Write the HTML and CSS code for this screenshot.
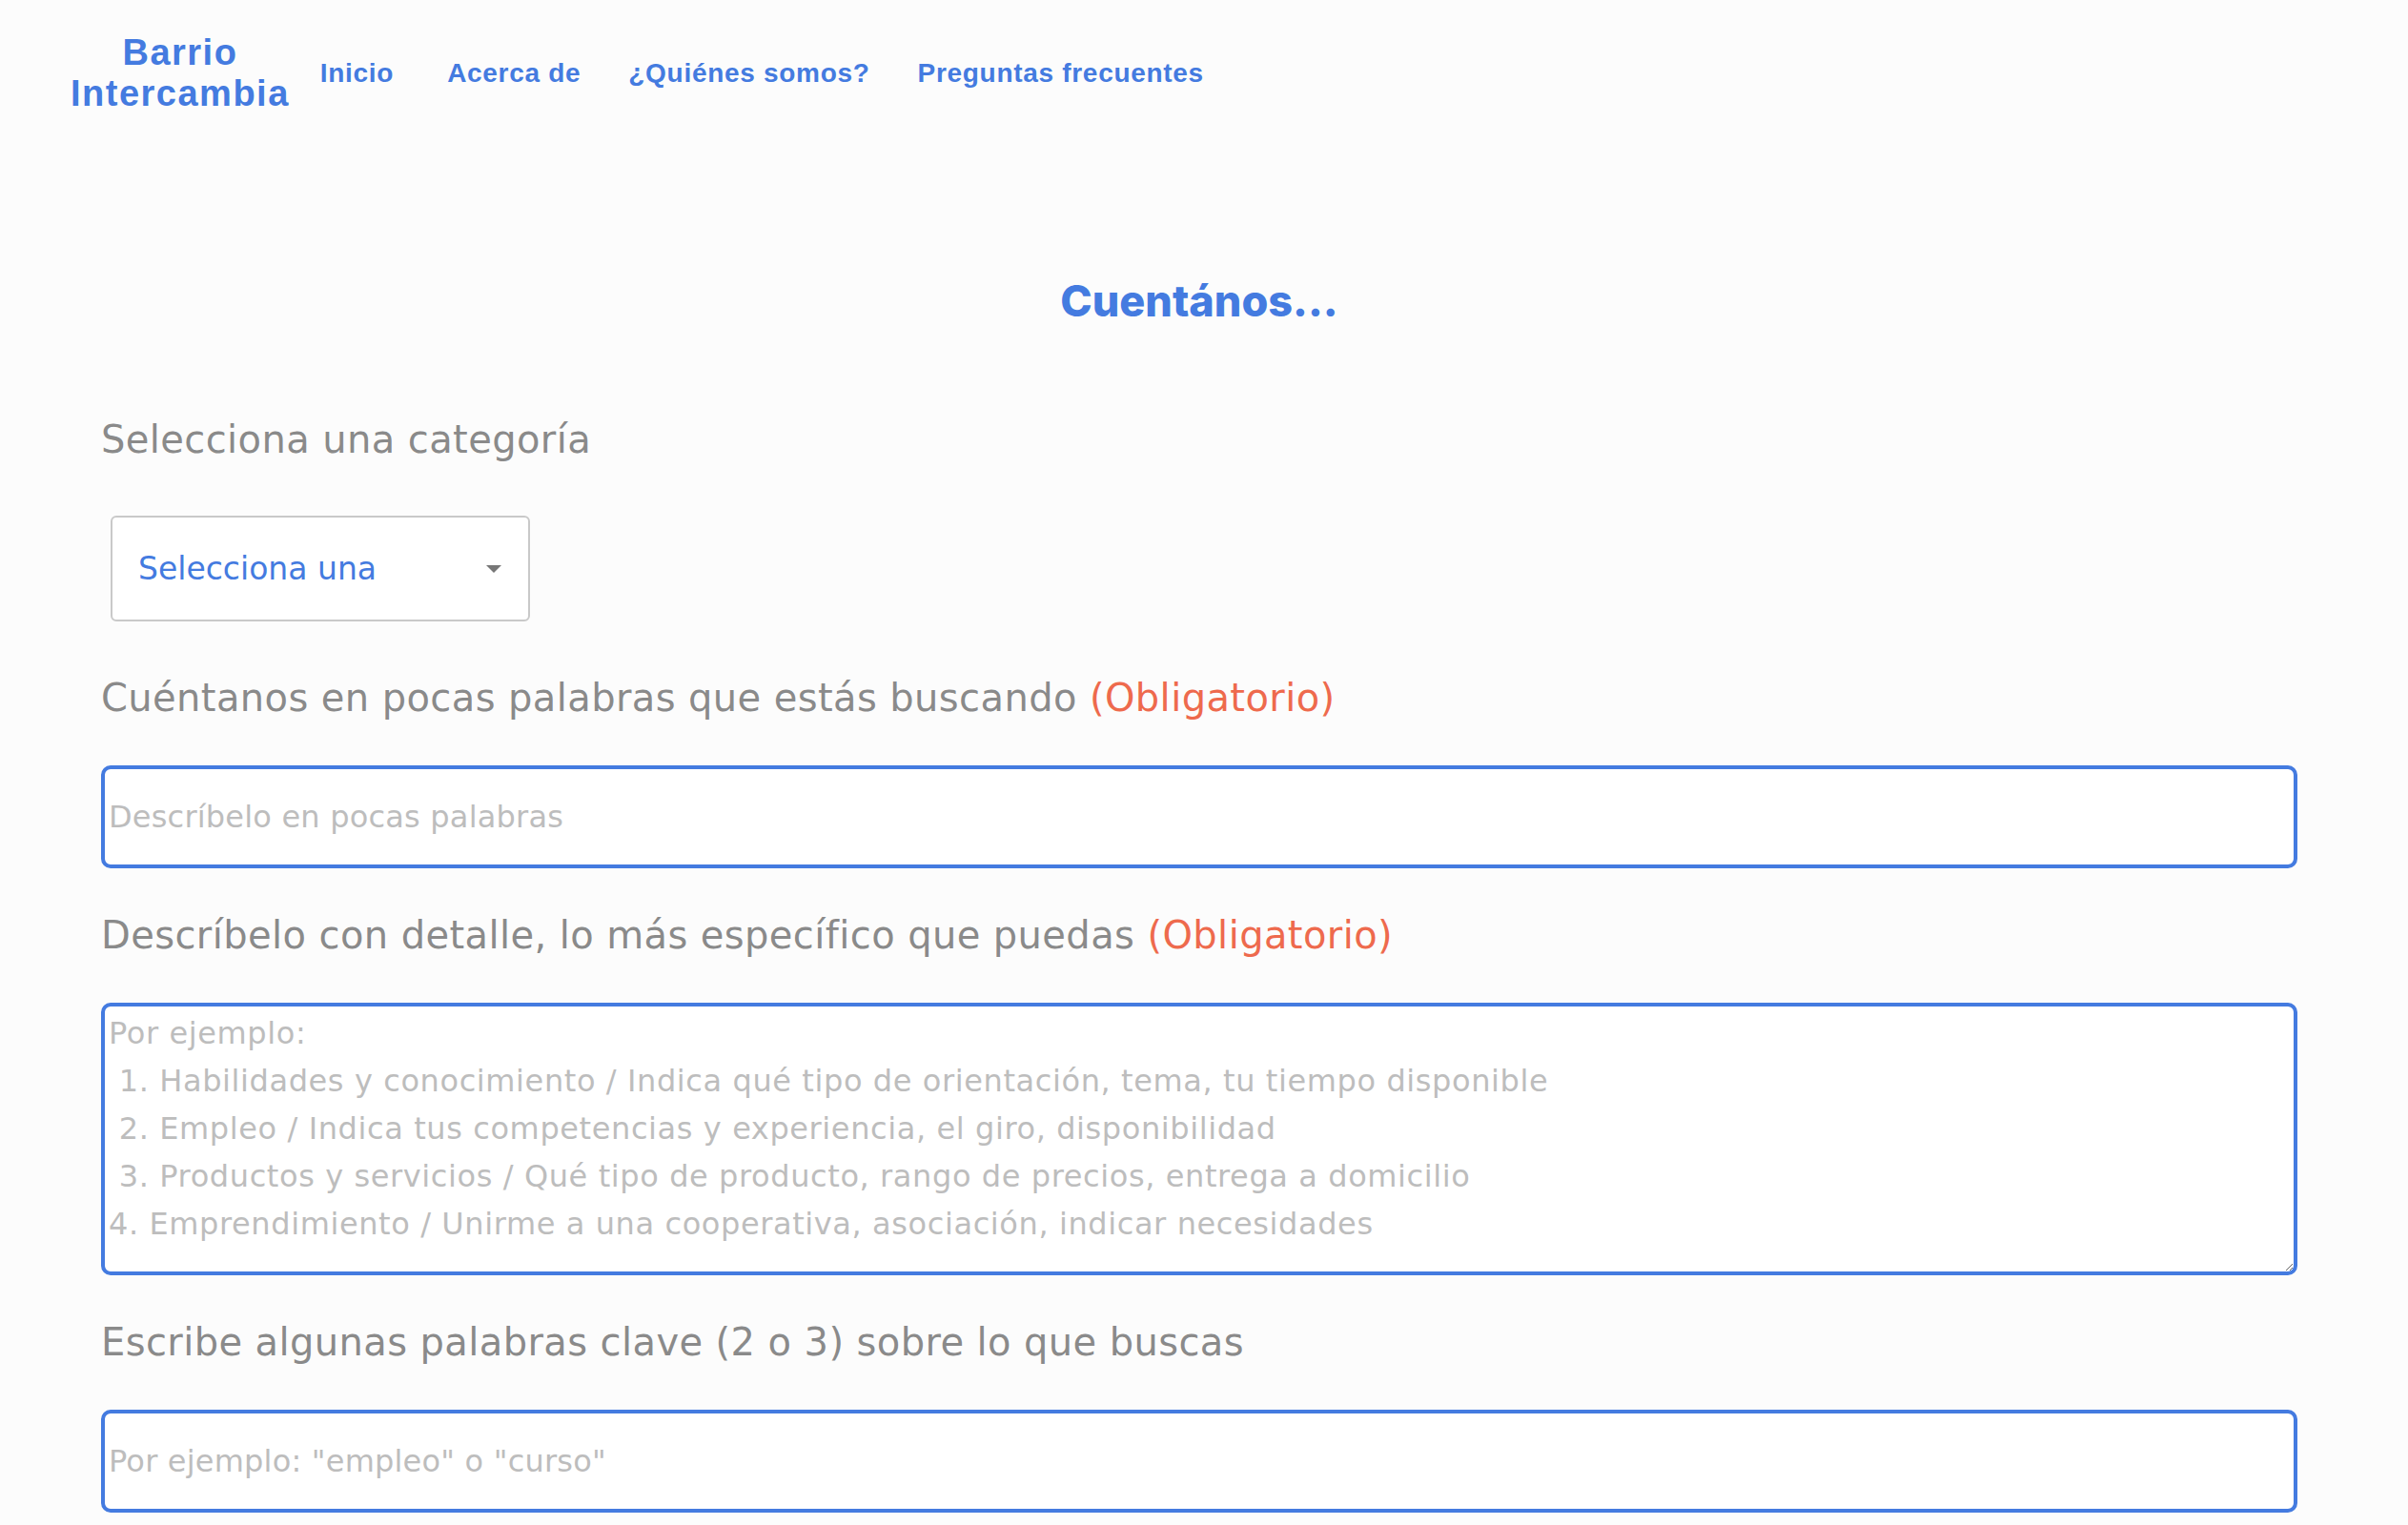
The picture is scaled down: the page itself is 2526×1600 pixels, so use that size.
FILE: index.html
```html
<!DOCTYPE html>
<html lang="es">
<head>
<meta charset="utf-8">
<title>Barrio Intercambia</title>
<link rel="stylesheet" href="styles.css">
</head>
<body>
<header class="navbar">
  <a class="brand" href="#">Barrio<br>Intercambia</a>
  <nav class="nav">
    <a class="nav-link nav-link-first" href="#">Inicio</a>
    <a class="nav-link" href="#">Acerca de</a>
    <a class="nav-link" href="#">¿Quiénes somos?</a>
    <a class="nav-link" href="#">Preguntas frecuentes</a>
  </nav>
</header>
<main class="form-page">
  <h1 class="title">Cuentános...</h1>
  <form class="form">
    <div class="field">
      <label class="label" for="cat">Selecciona una categoría</label>
      <div class="select-wrap">
        <select id="cat" class="select">
          <option>Selecciona una</option>
        </select>
        <span class="caret"></span>
      </div>
    </div>
    <div class="field field-after-select">
      <label class="label" for="short">Cuéntanos en pocas palabras que estás buscando <span class="req">(Obligatorio)</span></label>
      <input id="short" class="input" type="text" placeholder="Descríbelo en pocas palabras">
    </div>
    <div class="field">
      <label class="label" for="detail">Descríbelo con detalle, lo más específico que puedas <span class="req">(Obligatorio)</span></label>
      <textarea id="detail" class="textarea" placeholder="Por ejemplo:&#10; 1. Habilidades y conocimiento / Indica qué tipo de orientación, tema, tu tiempo disponible&#10; 2. Empleo / Indica tus competencias y experiencia, el giro, disponibilidad&#10; 3. Productos y servicios / Qué tipo de producto, rango de precios, entrega a domicilio&#10;4. Emprendimiento / Unirme a una cooperativa, asociación, indicar necesidades"></textarea>
    </div>
    <div class="field">
      <label class="label" for="kw">Escribe algunas palabras clave (2 o 3) sobre lo que buscas</label>
      <input id="kw" class="input" type="text" placeholder="Por ejemplo: &quot;empleo&quot; o &quot;curso&quot;">
    </div>
  </form>
</main>
</body>
</html>
```

FILE: styles.css
```css
html, body {
  margin: 0;
  padding: 0;
  background: #fcfcfc;
}

body {
  font-family: "DejaVu Sans", "Liberation Sans", sans-serif;
  overflow: hidden;
}

.navbar {
  display: flex;
  align-items: center;
  padding: 34px 0 0 74px;
}

.brand {
  font-family: "Liberation Sans", Arial, sans-serif;
  font-weight: 700;
  font-size: 38px;
  line-height: 43px;
  letter-spacing: 1.5px;
  color: #447be0;
  text-align: center;
  text-decoration: none;
  margin-right: 7px;
}

.nav {
  display: flex;
  align-items: center;
}

.nav-link {
  font-family: "Liberation Sans", Arial, sans-serif;
  font-weight: 700;
  font-size: 28px;
  letter-spacing: 0.7px;
  color: #447be0;
  text-decoration: none;
  padding: 0 25px;
}

.nav-link-first {
  padding-right: 31px;
}

.form-page {
  padding: 0 116px 0 106px;
}

.title {
  margin: 166px 0 0;
  font-family: Inter, "Liberation Sans", sans-serif;
  font-weight: 800;
  font-size: 45px;
  line-height: 60px;
  color: #447be0;
  text-align: center;
}

.form {
  margin-top: 85px;
}

.field {
  display: flex;
  flex-direction: column;
  margin-top: 40px;
}

.field:first-child {
  margin-top: 0;
}

.field-after-select {
  margin-top: 50px;
}

.label {
  font-family: "DejaVu Sans", sans-serif;
  font-weight: 400;
  font-size: 40px;
  line-height: 60px;
  letter-spacing: 0.4px;
  color: #8a8a8a;
  margin-bottom: 41px;
}

.field:first-child .label {
  margin-bottom: 43px;
}

.req {
  color: #ee6a4d;
}

.select-wrap {
  position: relative;
  width: 440px;
  margin: 7px 0 0 10px;
}

.select {
  appearance: none;
  -webkit-appearance: none;
  display: block;
  width: 440px;
  height: 111px;
  box-sizing: border-box;
  border: 2px solid #c9c9c9;
  border-radius: 6px;
  background: #ffffff;
  padding: 0 0 0 27px;
  font-family: "DejaVu Sans", sans-serif;
  font-size: 33px;
  color: #447be0;
  outline: none;
}

.caret {
  position: absolute;
  left: 394px;
  top: 52px;
  width: 0;
  height: 0;
  border-left: 8px solid transparent;
  border-right: 8px solid transparent;
  border-top: 8px solid #777777;
  pointer-events: none;
}

.input,
.textarea {
  display: block;
  width: 100%;
  box-sizing: border-box;
  border: 4px solid #447be0;
  border-radius: 10px;
  background: #ffffff;
  font-family: "DejaVu Sans", sans-serif;
  color: #555555;
  outline: none;
  margin: 0;
}

.input {
  height: 108px;
  padding: 0 4px;
  font-size: 32px;
  letter-spacing: 0.2px;
}

.textarea {
  height: 286px;
  padding: 3px 4px 0;
  font-size: 32px;
  letter-spacing: 0.6px;
  line-height: 50px;
  resize: vertical;
}

.input::placeholder,
.textarea::placeholder {
  color: #bdbdbd;
  opacity: 1;
}
```
